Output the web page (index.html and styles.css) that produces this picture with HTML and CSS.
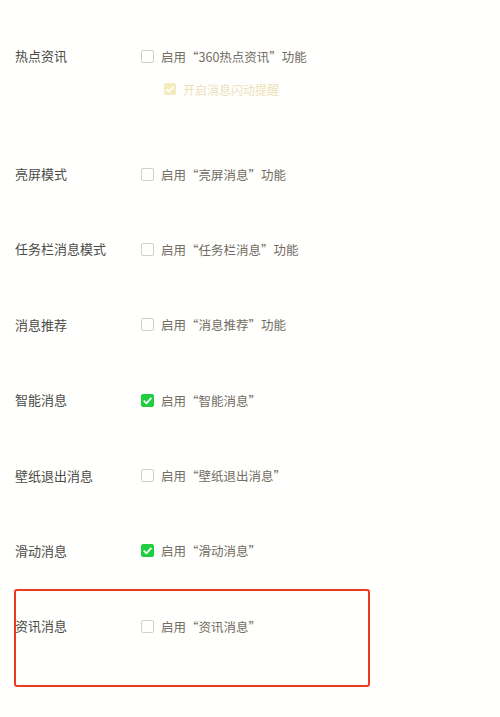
FILE: index.html
```html
<!DOCTYPE html>
<html lang="zh-CN">
<head>
<meta charset="utf-8">
<link rel="stylesheet" href="styles.css">
</head>
<body>
<div class="settings">
  <div class="row first">
    <div class="label">热点资讯</div>
    <div class="options">
      <div class="opt"><span class="box"></span><span>启用“360热点资讯”功能</span></div>
      <div class="opt sub"><span class="box faded"><svg viewBox="0 0 12 12"><path d="M2.5 6.2 L5 8.6 L9.6 3.6" fill="none" stroke="#fff" stroke-width="1.6"/></svg></span><span>开启消息闪动提醒</span></div>
    </div>
  </div>
  <div class="row">
    <div class="label">亮屏模式</div>
    <div class="options"><div class="opt"><span class="box"></span><span>启用“亮屏消息”功能</span></div></div>
  </div>
  <div class="row">
    <div class="label">任务栏消息模式</div>
    <div class="options"><div class="opt"><span class="box"></span><span>启用“任务栏消息”功能</span></div></div>
  </div>
  <div class="row">
    <div class="label">消息推荐</div>
    <div class="options"><div class="opt"><span class="box"></span><span>启用“消息推荐”功能</span></div></div>
  </div>
  <div class="row">
    <div class="label">智能消息</div>
    <div class="options"><div class="opt"><span class="box checked"><svg viewBox="0 0 12 12"><path d="M2.5 6.2 L5 8.6 L9.6 3.6" fill="none" stroke="#fff" stroke-width="1.6"/></svg></span><span>启用“智能消息”</span></div></div>
  </div>
  <div class="row">
    <div class="label">壁纸退出消息</div>
    <div class="options"><div class="opt"><span class="box"></span><span>启用“壁纸退出消息”</span></div></div>
  </div>
  <div class="row">
    <div class="label">滑动消息</div>
    <div class="options"><div class="opt"><span class="box checked"><svg viewBox="0 0 12 12"><path d="M2.5 6.2 L5 8.6 L9.6 3.6" fill="none" stroke="#fff" stroke-width="1.6"/></svg></span><span>启用“滑动消息”</span></div></div>
  </div>
  <div class="row last">
    <div class="label">资讯消息</div>
    <div class="options"><div class="opt"><span class="box"></span><span>启用“资讯消息”</span></div></div>
    <div class="highlight"></div>
  </div>
</div>
</body>
</html>
```

FILE: styles.css
```css
html, body {
  margin: 0;
  padding: 0;
  background: #fffffd;
}
body {
  font-family: "Noto Sans CJK SC", "Noto Sans", sans-serif;
  width: 500px;
  height: 717px;
  overflow: hidden;
}
.settings {
  padding: 46px 0 0 15px;
  display: flex;
  flex-direction: column;
}
.row {
  display: flex;
  align-items: flex-start;
  height: 75.4px;
  position: relative;
}
.row.first {
  height: 118px;
}
.label {
  width: 126px;
  font-size: 13px;
  line-height: 20px;
  color: #4c4c48;
  font-weight: 400;
}
.options {
  display: flex;
  flex-direction: column;
  gap: 13px;
}
.opt {
  display: flex;
  align-items: center;
  height: 20px;
  font-size: 12.5px;
  color: #726c62;
  gap: 7px;
}
.opt.sub {
  margin-left: 23px;
  font-size: 12px;
  color: #ecdfb8;
}
.box {
  width: 13px;
  height: 13px;
  box-sizing: border-box;
  border: 1px solid #d6cfc0;
  border-radius: 2px;
  background: #fff;
  display: inline-flex;
}
.box svg {
  width: 13px;
  height: 13px;
  margin: -1px;
}
.box.checked {
  background: #1fcf3d;
  border-color: #1fcf3d;
}
.box.faded {
  width: 12px;
  height: 12px;
  background: #f6ebbd;
  border-color: #f6ebbd;
}
.box.faded svg {
  width: 12px;
  height: 12px;
}
.highlight {
  position: absolute;
  left: -1.5px;
  top: -27px;
  width: 356px;
  height: 98px;
  box-sizing: border-box;
  border: 2.5px solid #ef3a1c;
  border-radius: 3px;
}
```
